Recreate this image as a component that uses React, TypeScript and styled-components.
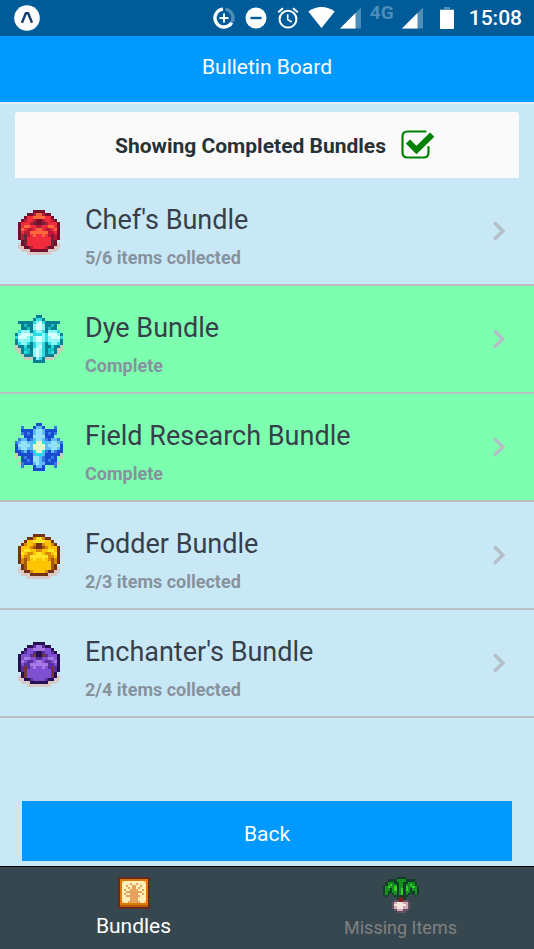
import React, { useState } from 'react';
import styled, { createGlobalStyle } from 'styled-components';

const GlobalStyle = createGlobalStyle`
  *, *::before, *::after { box-sizing: border-box; }
  body {
    margin: 0;
    background: #c9e8f5;
    font-family: Roboto, "Liberation Sans", sans-serif;
  }
  button { font: inherit; border: 0; cursor: pointer; }
`;

const Screen = styled.div`
  display: flex;
  flex-direction: column;
  min-height: 100vh;
  background: #c9e8f5;
`;

const StatusBar = styled.div`
  display: flex;
  align-items: center;
  justify-content: space-between;
  height: 36px;
  padding: 0 12px 0 14px;
  background: #005c99;
  color: #fff;
`;

const StatusGroup = styled.div`
  display: flex;
  align-items: center;
`;

const StatusIcon = styled.svg<{ $width: number; $before?: number }>`
  display: block;
  flex: none;
  width: ${(p) => p.$width}px;
  height: ${(p) => (p.$width > 24 ? 26 : 22)}px;
  margin-left: ${(p) => p.$before ?? 0}px;
`;

const NetworkLabel = styled.span`
  align-self: flex-start;
  margin: 0 8px 0 9px;
  font-size: 19px;
  font-weight: 700;
  line-height: 16px;
  color: #4d8db8;
`;

const Clock = styled.time`
  margin-left: 15px;
  font-size: 21px;
  font-weight: 500;
  line-height: 24px;
`;

const Header = styled.header`
  display: flex;
  align-items: center;
  justify-content: center;
  height: 68px;
  padding-bottom: 4px;
  background: #0099ff;
  border-bottom: 2px solid #e4edf4;
`;

const Title = styled.h1`
  margin: 0;
  font-size: 21px;
  font-weight: 400;
  line-height: 28px;
  color: #fff;
`;

const Content = styled.main`
  display: flex;
  flex: 1;
  flex-direction: column;
  padding-top: 8px;
`;

const FilterCard = styled.label`
  display: flex;
  align-items: center;
  justify-content: center;
  gap: 14px;
  height: 66px;
  margin: 0 15px;
  padding: 2px 0 0 17px;
  border-radius: 3px 3px 0 0;
  background: #fafafa;
  color: #263238;
  font-size: 21px;
  font-weight: 700;
  cursor: pointer;
`;

const CheckWrap = styled.span`
  position: relative;
  width: 36px;
  height: 32px;
`;

const CheckInput = styled.input`
  position: absolute;
  inset: 0;
  width: 100%;
  height: 100%;
  margin: 0;
  opacity: 0;
  cursor: pointer;
`;

const CheckMark = styled.svg`
  display: block;
  width: 36px;
  height: 32px;
`;

const BundleList = styled.ul`
  margin: 0;
  padding: 0;
  list-style: none;
`;

const BundleRow = styled.button<{ $complete: boolean }>`
  display: flex;
  align-items: center;
  width: 100%;
  height: 108px;
  padding: 0 28px 0 15px;
  border-bottom: 2px solid #b9bfc3;
  background: ${(p) => (p.$complete ? '#7dffb0' : 'transparent')};
  text-align: left;
`;

const BundleText = styled.span`
  display: flex;
  flex: 1;
  flex-direction: column;
  gap: 10px;
  padding: 12px 0 0 22px;
`;

const BundleName = styled.span`
  font-size: 27px;
  line-height: 32px;
  color: #37404a;
`;

const BundleStatus = styled.span`
  font-size: 18px;
  font-weight: 700;
  line-height: 24px;
  color: #86939e;
`;

const Chevron = styled.svg`
  display: block;
  width: 14px;
  height: 22px;
`;

const BackButton = styled.button`
  height: 60px;
  margin: auto 22px 5px;
  padding-top: 6px;
  background: #0099ff;
  color: #fff;
  font-size: 21px;
`;

const TabBar = styled.nav`
  display: grid;
  grid-template-columns: 1fr 1fr;
  height: 83px;
  border-top: 1px solid #000;
  background: #37474f;
`;

const Tab = styled.a<{ $active?: boolean }>`
  display: flex;
  flex-direction: column;
  align-items: center;
  gap: ${(p) => (p.$active ? 4 : 2)}px;
  padding-top: 10px;
  color: ${(p) => (p.$active ? '#fff' : '#808080')};
  font-size: ${(p) => (p.$active ? 21 : 18)}px;
  line-height: 26px;
  text-decoration: none;
`;

const PixelSvg = styled.svg<{ $size: number }>`
  display: block;
  flex: none;
  width: ${(p) => p.$size}px;
  height: ${(p) => p.$size}px;
`;

type Palette = Record<string, string>;

const BAG = [
  '................',
  '......DDDD......',
  '....DDmOOmDD....',
  '...DRROOOORRD...',
  '..DmRRmDDmRRmD..',
  '.DRRRmkDDkmRRRD.',
  '.DROORRmmRROORD.',
  '.DORmmROORmmROD.',
  '.DRmmOOOOOOmmRD.',
  '.DmkmRORRORmkmD.',
  '.DmkRRRRRRRRkmD.',
  '..DkRRRRRRRRkD..',
  '.sDkRRRRRRRRkDs.',
  '.ssDDmRRRRmDDss.',
  '..sssDDDDDDsss..',
  '....ssssssss....',
];

const DYE = [
  '.......DD.......',
  '......DccD......',
  '.DDDDDcLWcDDDDD.',
  '..DmDDLWWLDDmD..',
  '..DDmDLWWLDmDD..',
  '.cLLLDcLLcDLLLc.',
  'DLWWWLcccLcWWWLD',
  'cWWWLcLWWLcLWWWc',
  'DLLLLcLWWLcLLLLD',
  'DcLLcDcLLcDcLLcD',
  'sDDcDDcLWcDDcDDs',
  'ssDmmDLWLcDmmDss',
  '.sDcmDLWLcDmcDs.',
  '..sDDDLWLcDDDs..',
  '...sssDLcDsss...',
  '......DDDD......',
];

const FIELD = [
  '.......DD.......',
  '..m...DccD...m..',
  '..DDDDcLLcDDDD..',
  '..mDmDcLLcDmDm..',
  '...DDDLLLLDDD...',
  '.mccDmcLLcmDccm.',
  'mcLLccCWWCccLLcm',
  'DLLLLcWWWWcLLLLD',
  'DcLLccWWWWccLLcD',
  'DDmcDmCWWCmDcmDD',
  'sDDDDDcCCcDDDDDs',
  's.DmDDLLcmDDmD.s',
  '..DDmDLLcmDmDD..',
  '.smDDDcLccDDDms.',
  '..m...DccD...m..',
  '......DDDD......',
];

const SCROLL = [
  'kkkkkkkkkkkkkkkk',
  'kOOOOOOOOOOOOOOk',
  'kOPWWWWWWWWWWPOk',
  'kOWWWWtWWtWWWWOk',
  'kOWWtWWttWWtWWOk',
  'kOWWWtWttWtWWWOk',
  'kOWtWWttttWWtWOk',
  'kOWWttttttttWWOk',
  'kOWtWWttttWWtWOk',
  'kOWWtttttttWWWOk',
  'kOWWWWttttWWWWOk',
  'kOWWWWttttWWWWOk',
  'kOPWWttttttWWPOk',
  'kOOOOOOOOOOOOOOk',
  'kDDDDDDDDDDDDDDk',
  'kkkkkkkkkkkkkkkk',
];

const PARSNIP = [
  '......DDDD......',
  '..DDDDGGGGDDDD..',
  '.DGGGDDGGDDGGGD.',
  '.DGgGGDGGDGGgGD.',
  'DGgGGgDGGDgGGgGD',
  'DGGDGgDGgDgGDGGD',
  'DGDDGGDGgDGGDDGD',
  'DGD.DGDGgDGD.DGD',
  '.D...DDDDDD...D.',
  '......DrrD......',
  '.....pprrpp.....',
  '....pPWWWPPp....',
  '....pWWWWWPp....',
  '....pPWWWPPp....',
  '.....pPPPpp.....',
  '......pppp......',
];

const RED: Palette = { D: '#74102b', k: '#69273c', m: '#b61b37', R: '#f22b3c', O: '#ff683b', s: '#d9c7c6' };
const YELLOW: Palette = { D: '#713215', k: '#a75708', m: '#d98a0a', R: '#ffc400', O: '#ffe428', s: '#d9c9c5' };
const PURPLE: Palette = { D: '#241052', k: '#74392c', m: '#57309c', R: '#8050d3', O: '#a578e5', s: '#d9c9c7' };
const TEAL: Palette = { D: '#087f92', m: '#15bdc5', c: '#2adde2', L: '#8cf7f4', W: '#d8ffff', s: '#c9cbb9' };
const BLUE: Palette = { D: '#174bd0', m: '#347be6', c: '#5dbbf5', C: '#1de1e8', L: '#93e1fb', W: '#e4fac5', s: '#c9cbb9' };
const PAPER: Palette = { k: '#652b20', D: '#b75b08', O: '#db790c', P: '#f7cd7d', W: '#fff0b9', t: '#e7a35d' };
const ROOT: Palette = { D: '#123f27', G: '#168e20', g: '#32cf24', r: '#7e2018', p: '#675064', P: '#cda9b3', W: '#f3e4dc' };

function Sprite({ rows, palette, size = 48 }: { rows: string[]; palette: Palette; size?: number }) {
  return (
    <PixelSvg $size={size} viewBox="0 0 16 16" shapeRendering="crispEdges" aria-hidden="true">
      {rows.flatMap((row, y) =>
        [...row].map((key, x) =>
          key === '.' ? null : <rect key={`${x}-${y}`} x={x} y={y} width="1" height="1" fill={palette[key]} />,
        ),
      )}
    </PixelSvg>
  );
}

const bundles = [
  { name: "Chef's Bundle", have: 5, need: 6, rows: BAG, palette: RED },
  { name: 'Dye Bundle', have: 6, need: 6, rows: DYE, palette: TEAL },
  { name: 'Field Research Bundle', have: 4, need: 4, rows: FIELD, palette: BLUE },
  { name: 'Fodder Bundle', have: 2, need: 3, rows: BAG, palette: YELLOW },
  { name: "Enchanter's Bundle", have: 2, need: 4, rows: BAG, palette: PURPLE },
];

function Signal({ before }: { before?: number }) {
  return (
    <StatusIcon $width={21} $before={before} viewBox="0 0 21 22">
      <path d="M21 0.5V21.5H0Z" fill="#4d8db8" />
      <path d="M15.5 6V21.5H0Z" fill="#fff" />
    </StatusIcon>
  );
}

function StatusIcons() {
  return (
    <StatusGroup>
      <StatusIcon $width={22} viewBox="0 0 22 22" fill="none">
        <path d="M12.5 2.1A9 9 0 0 1 19 15" stroke="#4d8db8" strokeWidth="3.4" />
        <path d="M10 2.1A9 9 0 1 0 18.7 15.7" stroke="#fff" strokeWidth="3.4" />
        <path d="M11 6.5v9M6.5 11h9" stroke="#fff" strokeWidth="2" />
      </StatusIcon>
      <StatusIcon $width={22} $before={10} viewBox="0 0 22 22">
        <circle cx="11" cy="11" r="10.5" fill="#fff" />
        <path d="M5.5 11h11" stroke="#005c99" strokeWidth="2.4" />
      </StatusIcon>
      <StatusIcon $width={22} $before={10} viewBox="0 0 22 22" fill="none" stroke="#fff" strokeWidth="2">
        <circle cx="11" cy="12.2" r="8.4" />
        <path d="M1.2 5.2 6 1.2M20.8 5.2 16 1.2" />
        <path d="M10.7 7.2v5.4l4 2.4" strokeWidth="1.6" />
      </StatusIcon>
      <StatusIcon $width={27} $before={9} viewBox="0 0 27 26">
        <path d="M0.3 6.5C8 0.5 19 0.5 26.7 6.5L13.5 23Z" fill="#fff" />
      </StatusIcon>
      <Signal before={5} />
      <NetworkLabel>4G</NetworkLabel>
      <Signal />
      <StatusIcon $width={14} $before={17} viewBox="0 0 14 22">
        <path d="M4 0h6v2h4v3H0V2h4Z" fill="#4d8db8" />
        <rect y="3" width="14" height="19" rx="0.8" fill="#fff" />
      </StatusIcon>
      <Clock>15:08</Clock>
    </StatusGroup>
  );
}

export default function App() {
  const [showCompleted, setShowCompleted] = useState(true);
  const visible = bundles.filter((b) => showCompleted || b.have < b.need);

  return (
    <>
      <GlobalStyle />
      <Screen>
        <StatusBar>
          <StatusIcon $width={26} viewBox="0 0 26 26">
            <circle cx="13" cy="13" r="12.8" fill="#fff" />
            <path d="M8 17.8 11.8 8.2H14.2L18 17.8" fill="none" stroke="#123f6b" strokeWidth="2.4" strokeLinejoin="round" />
          </StatusIcon>
          <StatusIcons />
        </StatusBar>
        <Header>
          <Title>Bulletin Board</Title>
        </Header>
        <Content>
          <FilterCard>
            Showing Completed Bundles
            <CheckWrap>
              <CheckInput
                type="checkbox"
                checked={showCompleted}
                onChange={(e) => setShowCompleted(e.target.checked)}
              />
              <CheckMark viewBox="0 0 36 32" fill="none" stroke="#008000" aria-hidden="true">
                <path
                  d="M25.5 1.5H7.5Q2.5 1.5 2.5 6.5V22.5Q2.5 27.5 7.5 27.5H23.5Q28.5 27.5 28.5 22.5V17"
                  strokeWidth="2.2"
                  strokeLinecap="round"
                />
                {showCompleted && <path d="M8 11.5 16.5 20 32.2 4.6" strokeWidth="6" />}
              </CheckMark>
            </CheckWrap>
          </FilterCard>
          <BundleList>
            {visible.map((b) => {
              const complete = b.have === b.need;
              return (
                <li key={b.name}>
                  <BundleRow type="button" $complete={complete}>
                    <Sprite rows={b.rows} palette={b.palette} />
                    <BundleText>
                      <BundleName>{b.name}</BundleName>
                      <BundleStatus>{complete ? 'Complete' : `${b.have}/${b.need} items collected`}</BundleStatus>
                    </BundleText>
                    <Chevron viewBox="0 0 14 22" fill="none" aria-hidden="true">
                      <path d="M2.2 2.5 10.8 11 2.2 19.5" stroke="#b3bec6" strokeWidth="3.4" />
                    </Chevron>
                  </BundleRow>
                </li>
              );
            })}
          </BundleList>
          <BackButton type="button">Back</BackButton>
        </Content>
        <TabBar>
          <Tab href="#bundles" $active>
            <Sprite rows={SCROLL} palette={PAPER} size={32} />
            Bundles
          </Tab>
          <Tab href="#missing">
            <Sprite rows={PARSNIP} palette={ROOT} size={36} />
            Missing Items
          </Tab>
        </TabBar>
      </Screen>
    </>
  );
}
